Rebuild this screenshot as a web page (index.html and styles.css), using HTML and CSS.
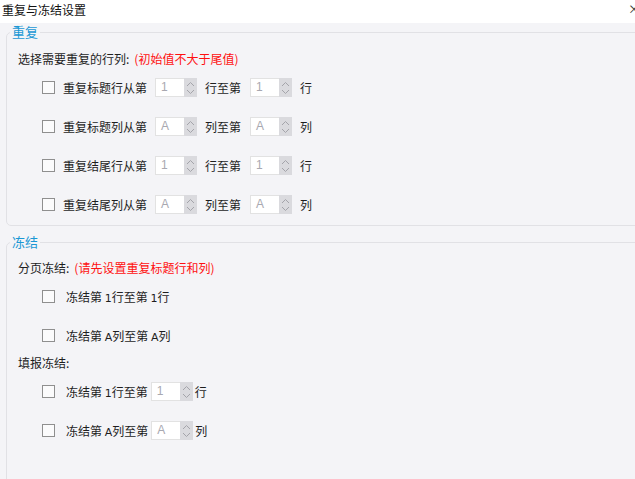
FILE: index.html
```html
<!DOCTYPE html>
<html lang="zh-CN">
<head>
    <meta charset="UTF-8">
    <title>重复与冻结设置</title>
    <link rel="stylesheet" href="styles.css">
</head>
<body>
    <div class="dialog">
        <div class="title-bar">
            <span class="title">重复与冻结设置</span>
            <span class="close-btn">×</span>
        </div>
        <div class="dialog-body">
            <fieldset class="group group-repeat">
                <legend>重复</legend>
                <div class="hint">选择需要重复的行列:<span class="warn">(初始值不大于尾值)</span></div>
                <div class="rows">
                    <div class="row">
                        <span class="check"></span>
                        <span class="label">重复标题行从第</span>
                        <div class="spinner"><span class="spin-value">1</span><span class="spin-btns"><svg width="13" height="18" viewBox="0 0 13 18"><path d="M3 7 L6.5 3.5 L10 7" /><path d="M3 11 L6.5 14.5 L10 11" /></svg></span></div>
                        <span class="label mid">行至第</span>
                        <div class="spinner"><span class="spin-value">1</span><span class="spin-btns"><svg width="13" height="18" viewBox="0 0 13 18"><path d="M3 7 L6.5 3.5 L10 7" /><path d="M3 11 L6.5 14.5 L10 11" /></svg></span></div>
                        <span class="label mid">行</span>
                    </div>
                    <div class="row">
                        <span class="check"></span>
                        <span class="label">重复标题列从第</span>
                        <div class="spinner"><span class="spin-value">A</span><span class="spin-btns"><svg width="13" height="18" viewBox="0 0 13 18"><path d="M3 7 L6.5 3.5 L10 7" /><path d="M3 11 L6.5 14.5 L10 11" /></svg></span></div>
                        <span class="label mid">列至第</span>
                        <div class="spinner"><span class="spin-value">A</span><span class="spin-btns"><svg width="13" height="18" viewBox="0 0 13 18"><path d="M3 7 L6.5 3.5 L10 7" /><path d="M3 11 L6.5 14.5 L10 11" /></svg></span></div>
                        <span class="label mid">列</span>
                    </div>
                    <div class="row">
                        <span class="check"></span>
                        <span class="label">重复结尾行从第</span>
                        <div class="spinner"><span class="spin-value">1</span><span class="spin-btns"><svg width="13" height="18" viewBox="0 0 13 18"><path d="M3 7 L6.5 3.5 L10 7" /><path d="M3 11 L6.5 14.5 L10 11" /></svg></span></div>
                        <span class="label mid">行至第</span>
                        <div class="spinner"><span class="spin-value">1</span><span class="spin-btns"><svg width="13" height="18" viewBox="0 0 13 18"><path d="M3 7 L6.5 3.5 L10 7" /><path d="M3 11 L6.5 14.5 L10 11" /></svg></span></div>
                        <span class="label mid">行</span>
                    </div>
                    <div class="row">
                        <span class="check"></span>
                        <span class="label">重复结尾列从第</span>
                        <div class="spinner"><span class="spin-value">A</span><span class="spin-btns"><svg width="13" height="18" viewBox="0 0 13 18"><path d="M3 7 L6.5 3.5 L10 7" /><path d="M3 11 L6.5 14.5 L10 11" /></svg></span></div>
                        <span class="label mid">列至第</span>
                        <div class="spinner"><span class="spin-value">A</span><span class="spin-btns"><svg width="13" height="18" viewBox="0 0 13 18"><path d="M3 7 L6.5 3.5 L10 7" /><path d="M3 11 L6.5 14.5 L10 11" /></svg></span></div>
                        <span class="label mid">列</span>
                    </div>
                </div>
            </fieldset>

            <fieldset class="group group-freeze">
                <legend>冻结</legend>
                <div class="hint">分页冻结:<span class="warn">(请先设置重复标题行和列)</span></div>
                <div class="rows">
                    <div class="row">
                        <span class="check"></span>
                        <span class="label freeze">冻结第 <span class="num">1</span>行至第 <span class="num">1</span>行</span>
                    </div>
                    <div class="row">
                        <span class="check"></span>
                        <span class="label freeze">冻结第 <span class="num">A</span>列至第 <span class="num">A</span>列</span>
                    </div>
                </div>
                <div class="hint hint-fill">填报冻结:</div>
                <div class="rows rows-fill">
                    <div class="row">
                        <span class="check"></span>
                        <span class="label freeze">冻结第 <span class="num">1</span>行至第</span>
                        <div class="spinner tight"><span class="spin-value">1</span><span class="spin-btns"><svg width="13" height="18" viewBox="0 0 13 18"><path d="M3 7 L6.5 3.5 L10 7" /><path d="M3 11 L6.5 14.5 L10 11" /></svg></span></div>
                        <span class="label after">行</span>
                    </div>
                    <div class="row">
                        <span class="check"></span>
                        <span class="label freeze">冻结第 <span class="num">A</span>列至第</span>
                        <div class="spinner tight"><span class="spin-value">A</span><span class="spin-btns"><svg width="13" height="18" viewBox="0 0 13 18"><path d="M3 7 L6.5 3.5 L10 7" /><path d="M3 11 L6.5 14.5 L10 11" /></svg></span></div>
                        <span class="label after">列</span>
                    </div>
                </div>
            </fieldset>
        </div>
    </div>
</body>
</html>
```

FILE: styles.css
```css
html, body {
    margin: 0;
    padding: 0;
    overflow: hidden;
    background-color: #f4f4f7;
}

body {
    font-family: "Noto Sans CJK SC", "Microsoft YaHei", sans-serif;
    font-size: 12px;
    color: #1e1e1e;
    width: 635px;
    height: 479px;
}

.dialog {
    width: 635px;
    height: 479px;
    overflow: hidden;
}

.title-bar {
    display: flex;
    justify-content: space-between;
    align-items: center;
    height: 23px;
    background-color: #ffffff;
    padding: 0 0 0 2px;
}

.title {
    font-size: 12px;
    line-height: 16px;
    margin-top: -4px;
    color: #111;
}

.close-btn {
    font-size: 12px;
    line-height: 12px;
    color: #333;
    margin-right: -5px;
    margin-top: -6px;
}

.dialog-body {
    padding: 1px 0 0 6px;
    margin-right: -12px;
}

.group {
    margin: 0;
    padding: 9px 0 1px 3px;
    border: 1px solid #e1e1e5;
    border-radius: 5px;
    min-width: 0;
}

.group legend {
    padding: 0 2px;
    font-size: 13px;
    line-height: 16px;
    color: #1a98d5;
}

.group-freeze {
    margin-top: 8px;
    padding-top: 8px;
    height: 250px;
}

.hint {
    height: 20px;
    line-height: 20px;
    padding-left: 8px;
}

.warn {
    color: #ff1010;
    margin-left: 5px;
}

.rows {
    margin-top: -1px;
}

.row {
    display: flex;
    align-items: center;
    height: 39px;
    padding-left: 32px;
}

.check {
    width: 11px;
    height: 11px;
    border: 1px solid #8f8f8f;
    background-color: #fbfbfc;
    flex: none;
}

.label {
    margin-left: 8px;
    white-space: pre;
}

.label.mid {
    margin-left: 8px;
    margin-right: 1px;
}

.label.freeze {
    margin-left: 11px;
}

.label.after {
    margin-left: 2px;
}

.num {
    font-family: "DejaVu Sans", sans-serif;
    font-size: 11px;
}

.spinner {
    display: flex;
    width: 42px;
    height: 19px;
    margin-left: 8px;
    flex: none;
}

.spinner.tight {
    margin-left: 3px;
}

.spin-value {
    flex: 1;
    background-color: #ffffff;
    border: 1px solid #e2e2e2;
    border-right: none;
    color: #a8a8b0;
    line-height: 17px;
    padding-left: 5px;
    font-family: "Liberation Sans", sans-serif;
    font-size: 12px;
}

.spin-btns {
    width: 13px;
    background-color: #dadade;
    display: flex;
    align-items: center;
}

.spin-btns svg {
    fill: none;
    stroke: #a4a4aa;
    stroke-width: 1;
}

.hint-fill {
    margin-top: -2px;
}

.rows-fill {
    margin-top: -1px;
}
```
